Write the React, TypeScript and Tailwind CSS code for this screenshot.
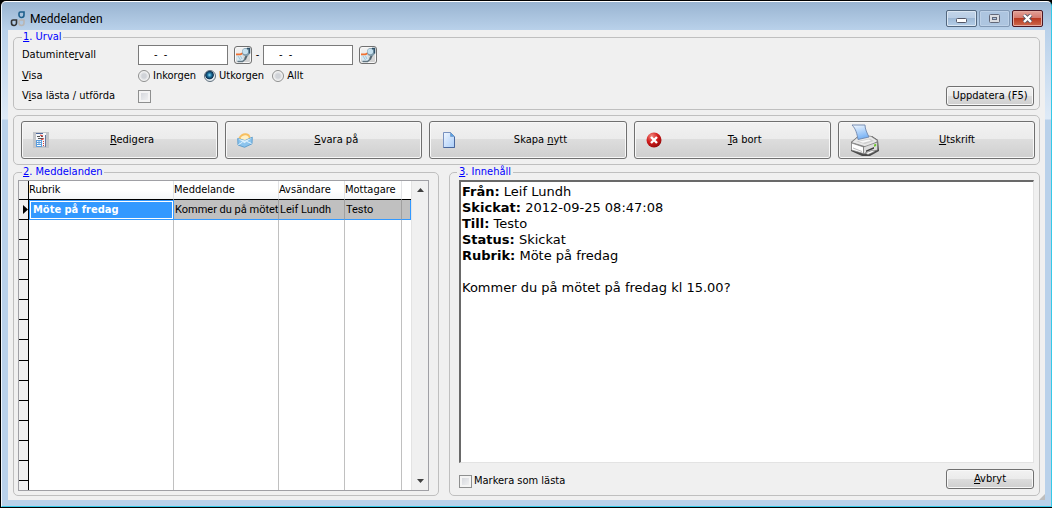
import type { ReactNode } from "react";

type Message = {
	subject: string;
	body: string;
	preview: string;
	sender: string;
	receiver: string;
};

const MESSAGES: Message[] = [
	{
		subject: "Möte på fredag",
		body: "Kommer du på mötet på fredag kl 15.00?",
		preview: "Kommer du på mötet",
		sender: "Leif Lundh",
		receiver: "Testo"
	}
];

const DETAILS = [
	{ label: "Från:", value: "Leif Lundh" },
	{ label: "Skickat:", value: "2012-09-25 08:47:08" },
	{ label: "Till:", value: "Testo" },
	{ label: "Status:", value: "Skickat" },
	{ label: "Rubrik:", value: "Möte på fredag" }
];

const EMPTY_ROWS = 13;

const BUTTON =
	"rounded-[3px] border border-[#707070] bg-[linear-gradient(#f2f2f2,#ebebeb_48%,#dddddd_48%,#cfcfcf)] shadow-[inset_0_0_0_1px_#f8f8f8]";

const CHECKBOX =
	"h-[13px] w-[13px] shrink-0 appearance-none border border-[#8e8f8f] bg-[linear-gradient(135deg,#cfd2d8,#f6f6f6)] shadow-[inset_0_0_0_2px_#f4f4f4]";

function AppLogo() {
	return (
		<svg className="h-4 w-4" viewBox="0 0 16 16" fill="none" strokeWidth="1.600">
			<path d="M10.500 1H14v3a2.500 2.500 0 0 1-2.500 2.500A2.500 2.500 0 0 1 9 4V2.500A1.500 1.500 0 0 1 10.500 1z" stroke="#1d5f8c" />
			<path d="M3 9h3.500v3A2.500 2.500 0 0 1 4 14.500 2.500 2.500 0 0 1 1.500 12v-1.500A1.500 1.500 0 0 1 3 9z" stroke="#333" />
			<path d="M10.500 9H14v3a2.500 2.500 0 0 1-2.500 2.500A2.500 2.500 0 0 1 9 12v-1.500A1.500 1.500 0 0 1 10.500 9z" stroke="#b9b6b4" />
		</svg>
	);
}

function PickerIcon() {
	return (
		<svg className="h-4 w-4" viewBox="0 0 16 16">
			<path d="M1 8.500l6-.8 2 5.300-1.500 2L2 14.500z" fill="#d8e9f2" />
			<path d="M2.500 14.500h5l3.500-3" fill="none" stroke="#5f7480" strokeWidth="1.500" />
			<path d="M3 9l2.500 4M5.500 9l1.500 3" stroke="#a0c4d8" />
			<path d="M1 7.300h4.500l3-1.500" fill="none" stroke="#f07030" strokeWidth="1.700" />
			<path d="M12 8l-2 4" stroke="#536570" strokeWidth="2" />
			<circle cx="11" cy="5" r="4" fill="#7f9bab" />
			<circle cx="10.300" cy="4.500" r="2.800" fill="#c5e0ef" />
			<path d="M12 1.500h2.500v5" fill="none" stroke="#2e5068" strokeWidth="1.500" />
		</svg>
	);
}

function EditIcon() {
	return (
		<svg className="h-4 w-4" viewBox="0 0 16 16">
			<path d="M0 0h16v16H0z" fill="#c3c5c9" />
			<path d="M3 1h10v13H3z" fill="#f5f7fb" />
			<path d="M3 1.500h7" stroke="#506a9c" />
			<path d="M12.500 3v12" stroke="#6678a0" />
			<path d="M4 4.500h3M8 4.500h2M5 6.500h5" stroke="#555" />
			<path d="M7 3l3 1M8 8l3-1.500" stroke="#d8403a" strokeWidth="1.200" />
			<path d="M3 8h6v7H3z" fill="#5b9ddd" />
			<path d="M4 9.500h1.500M6.500 9.500H8M4 11.500h1.500M6.500 11.500H8M4 13.500h4" stroke="#fff" />
			<path d="M10.500 9v5" stroke="#d8403a" strokeDasharray="1 1" />
		</svg>
	);
}

function ReplyIcon() {
	return (
		<svg className="h-4 w-4" viewBox="0 0 16 16">
			<path d="M1.500 6C3 2.500 6 .8 9 1.200s4.500 2 4.500 5.300l-6 3z" fill="#f7bf5f" />
			<path d="M3.500 6C5 3.700 7 3 9 3.300s3 1.700 3 4l-5 2z" fill="#fff0c6" />
			<path d="M.7 6.500L8 8.500l7.300-3.300-.3 6.600-7.500 3.500L1 13z" fill="#8cc4ed" stroke="#4b93c9" strokeWidth=".8" />
			<path d="M1 6.800l6.500 4.400L15 5.700l-7 2.800z" fill="#d9effd" />
			<path d="M1.300 12.700l4.200-2.600M14.500 11.500l-4.500-2" fill="none" stroke="#e2f4ff" />
		</svg>
	);
}

function PageIcon() {
	return (
		<svg className="h-4 w-4" viewBox="0 0 16 16">
			<defs>
				<linearGradient id="page" x2="1" y2="1">
					<stop stopColor="#f1f7ff" />
					<stop offset="1" stopColor="#a8ccf8" />
				</linearGradient>
			</defs>
			<path d="M2.500.500h7l4 4v11h-11z" fill="url(#page)" stroke="#7891bf" />
			<path d="M13.500 5v10.500h-11" fill="none" stroke="#49679d" />
			<path d="M9.500.500v4h4z" fill="#58a3e4" stroke="#6c8dbd" strokeWidth=".6" />
		</svg>
	);
}

function DeleteIcon() {
	return (
		<svg className="h-4 w-4" viewBox="0 0 16 16">
			<defs>
				<radialGradient id="red" cx=".35" cy=".25" r=".8">
					<stop stopColor="#f28a80" />
					<stop offset=".5" stopColor="#d31e1e" />
					<stop offset="1" stopColor="#940909" />
				</radialGradient>
			</defs>
			<circle cx="8" cy="8" r="7.500" fill="url(#red)" />
			<path d="M5 5l6 6M11 5l-6 6" stroke="#fff" strokeWidth="2.400" />
		</svg>
	);
}

function PrinterIcon() {
	return (
		<svg className="h-8 w-[30px]" viewBox="0 0 30 32">
			<defs>
				<linearGradient id="sheet" x2=".3" y2="1">
					<stop stopColor="#f4f9ff" />
					<stop offset="1" stopColor="#79b3f5" />
				</linearGradient>
			</defs>
			<path d="M1 18l6-5 15-1 6 4 1 11-9 5h-8L1 27z" fill="#4b4b4b" />
			<path d="M1.500 18.500L7 13.500l12-1.500 2 .3 7 4.700-10 6.500z" fill="#e8e8e8" stroke="#8a8a8a" strokeWidth=".7" />
			<path d="M2 1h13c0 4 2 8 4 12L8 15.500C7 10 6 5 2 1z" fill="url(#sheet)" stroke="#6e86ad" strokeWidth=".9" />
			<path d="M6 17.500l14-3 4 2.500-9 3z" fill="#cfcfcf" />
			<path d="M9 17.500l10-2 2 1.300-8 2z" fill="#f9f9f9" />
			<path d="M1.500 19l12 4v6.500L1.500 26z" fill="#fff" stroke="#8b8b8b" strokeWidth=".7" />
			<path d="M3 24l9 3.500" stroke="#aaa" strokeWidth=".8" />
			<path d="M13.500 23L27.500 18v8l-14 4z" fill="#dcdcdc" stroke="#777" strokeWidth=".7" />
			<path d="M16 26.500l8-3.500v1.700l-8 3.300z" fill="#3e3e3e" />
			<path d="M15 29l7-2.500 3 1-7 3z" fill="#fff" stroke="#777" strokeWidth=".7" />
			<path d="M24 20.500l2.200-.8v2.300l-2.200.8z" fill="#6fc82f" />
		</svg>
	);
}

const TOOLS: { id: string; icon: ReactNode; label: ReactNode; iconBox: string }[] = [
	{ id: "edit", icon: <EditIcon />, label: <><u>R</u>edigera</>, iconBox: "w-9" },
	{ id: "reply", icon: <ReplyIcon />, label: <><u>S</u>vara på</>, iconBox: "w-9" },
	{ id: "new", icon: <PageIcon />, label: <>Skapa <u>n</u>ytt</>, iconBox: "w-9" },
	{ id: "delete", icon: <DeleteIcon />, label: <><u>T</u>a bort</>, iconBox: "w-9" },
	{ id: "print", icon: <PrinterIcon />, label: <><u>U</u>tskrift</>, iconBox: "w-13" }
];

function TitleBar() {
	return (
		<header className="flex h-7 items-center pt-[5px] pr-[2px] pl-[2px]">
			<AppLogo />
			<h1 className="flex-1 pl-1 font-[Roboto,sans-serif] text-[12px] leading-4">Meddelanden</h1>
			<div className="flex gap-[2px]">
				<button
					type="button"
					aria-label="Minimera"
					className="flex h-[17px] w-[31px] items-center justify-center rounded-[2px] border border-[#52677f] bg-[linear-gradient(#c3d5e9,#b8cde5_48%,#9db8d5_48%,#b5cee8)] shadow-[inset_0_0_0_1px_#dbe7f3]"
				>
					<svg className="mt-1 h-[5px] w-[11px]" viewBox="0 0 11 5">
						<rect x=".5" y=".5" width="10" height="4" rx="1" fill="#fff" stroke="#535666" />
					</svg>
				</button>
				<button
					type="button"
					aria-label="Maximera"
					disabled
					className="flex h-[17px] w-[31px] items-center justify-center rounded-[2px] border border-[#8299b5] bg-[#adc5e0] shadow-[inset_0_0_0_1px_#bdd1e8]"
				>
					<svg className="h-[9px] w-[11px]" viewBox="0 0 11 9">
						<rect x=".5" y=".5" width="10" height="8" rx="1" fill="#dbdde2" stroke="#626879" />
						<rect x="3.500" y="3.500" width="4" height="2" fill="#adc5e0" stroke="#626879" />
					</svg>
				</button>
				<button
					type="button"
					aria-label="Stäng"
					className="flex h-[17px] w-[31px] items-center justify-center rounded-[2px] border border-[#4c1622] bg-[linear-gradient(#e2a198,#d4776b_48%,#b8371f_48%,#cd6a4d)] shadow-[inset_0_0_0_1px_#e5aaa0]"
				>
					<svg className="h-[9px] w-[11px]" viewBox="0 0 11 9">
						<path d="M2 1l7 7M9 1L2 8" stroke="#535666" strokeWidth="4" />
						<path d="M2 1l7 7M9 1L2 8" stroke="#fff" strokeWidth="2.400" />
					</svg>
				</button>
			</div>
		</header>
	);
}

function DateField({ label, id }: { label: string; id: string }) {
	return (
		<>
			<input
				id={id}
				aria-label={label}
				defaultValue="-  -"
				className="h-5 w-[90px] border border-[#7a7a7a] bg-white pl-[15px] whitespace-pre"
			/>
			<button
				type="button"
				aria-label={`Välj ${label.toLowerCase()}`}
				className={`ml-[6px] flex h-[18px] w-[18px] items-center justify-center ${BUTTON}`}
			>
				<PickerIcon />
			</button>
		</>
	);
}

function Radio({ label, checked }: { label: string; checked?: boolean }) {
	return (
		<label className="flex items-center gap-[3px]">
			<input
				type="radio"
				name="folder"
				defaultChecked={checked}
				className="h-3 w-3 appearance-none rounded-full border border-[#8e8f8f] bg-[radial-gradient(circle,#d0d3d8_30%,#f4f4f4_65%)] checked:border-[#5f6f7d] checked:bg-[radial-gradient(circle_at_45%_40%,#8fe0f8_0%,#1c6f9c_25%,#0b2f4f_48%,#e8eef2_58%)]"
			/>
			{label}
		</label>
	);
}

function Filters() {
	return (
		<fieldset className="flex min-w-0 items-end justify-between rounded-[5px] border border-[#bfbfbf] pt-[2px] pr-[5px] pb-[3px] pl-2">
			<legend className="px-px leading-3 text-[#0000ff]">
				<u>1</u>. Urval
			</legend>
			<div className="grid grid-cols-[116px_auto] leading-5">
				<label htmlFor="from">
					Datuminte<u>r</u>vall
				</label>
				<div className="flex items-center">
					<DateField id="from" label="Från datum" />
					<span className="w-[11px] text-center">-</span>
					<DateField id="to" label="Till datum" />
				</div>
				<span className="pt-px">
					<u>V</u>isa
				</span>
				<div className="flex items-center gap-2 pt-px">
					<Radio label="Inkorgen" />
					<Radio label="Utkorgen" checked />
					<Radio label="Allt" />
				</div>
				<label htmlFor="read">
					V<u>i</u>sa lästa / utförda
				</label>
				<div className="flex items-center">
					<input id="read" type="checkbox" className={CHECKBOX} />
				</div>
			</div>
			<button type="button" className={`h-5 w-[88px] ${BUTTON}`}>
				Uppdatera (F5)
			</button>
		</fieldset>
	);
}

function Toolbar() {
	return (
		<div className="mt-[5px] grid grid-cols-5 gap-[7px] rounded-[5px] border border-[#bfbfbf] py-[5px] pr-1 pl-[7px]">
			{TOOLS.map((tool) => (
				<button key={tool.id} type="button" className={`flex h-[38px] items-center pr-1 pl-[11px] ${BUTTON}`}>
					<span className={`shrink-0 ${tool.iconBox}`}>{tool.icon}</span>
					<span className="flex-1 pr-[18px] text-center">{tool.label}</span>
				</button>
			))}
		</div>
	);
}

function MessageList() {
	return (
		<fieldset className="flex w-[426px] shrink-0 rounded-[5px] border border-[#bfbfbf] px-1 pb-1">
			<legend className="ml-1 px-px leading-3 text-[#0000ff]">
				<u>2</u>. Meddelanden
			</legend>
			<div className="mt-[2px] flex w-[411px] border border-[#a0a0a5] bg-white">
				<table className="w-[392px] table-fixed border-separate border-spacing-0 text-left">
					<colgroup>
						<col className="w-[10px]" />
						<col className="w-[145px]" />
						<col className="w-[105px]" />
						<col className="w-[66px]" />
						<col className="w-[57px]" />
						<col className="w-[9px]" />
					</colgroup>
					<thead>
						<tr className="h-[19px] bg-[linear-gradient(#ffffff_50%,#f3f5f7)] *:border-b *:border-b-black *:p-0 *:font-normal">
							<th className="border-r border-r-black bg-[#f0f0f0]" />
							<th className="border-r border-r-[#e2e3e5]">Rubrik</th>
							<th className="border-r border-r-[#e2e3e5]">Meddelande</th>
							<th className="border-r border-r-[#e2e3e5]">Avsändare</th>
							<th className="border-r border-r-[#e2e3e5]">Mottagare</th>
							<th className="bg-white" />
						</tr>
					</thead>
					<tbody>
						{MESSAGES.map((message) => (
							<tr
								key={message.subject}
								className="h-5 bg-[#c0c0c0] *:border-b *:border-b-[#3399ff] *:py-0 *:whitespace-nowrap"
							>
								<td className="border-r border-r-black !border-b-black bg-[#f0f0f0] px-0">
									<svg className="ml-1 h-[9px] w-[5px]" viewBox="0 0 5 9">
										<path d="M0 0l5 4.500L0 9z" />
									</svg>
								</td>
								<td className="border-t border-r border-l border-[#3399ff] bg-white px-0">
									<div className="m-px bg-[#3399ff] pl-[2px] font-bold text-white leading-4">{message.subject}</div>
								</td>
								<td
									className="border-r border-r-[#a0a0a0] pr-0 pl-px font-[Roboto,sans-serif]"
									title={message.body}
								>
									{message.preview}
								</td>
								<td className="border-r border-r-[#a0a0a0] pr-0 pl-px font-[Roboto,sans-serif]">
									{message.sender}
								</td>
								<td className="border-r border-r-[#a0a0a0] pr-0 pl-px font-[Roboto,sans-serif]">
									{message.receiver}
								</td>
								<td className="border-r border-r-[#3399ff] px-0" />
							</tr>
						))}
						{Array.from({ length: EMPTY_ROWS }, (_, i) => (
							<tr key={i} className="h-5 *:border-r *:border-r-[#c0c0c0] *:p-0">
								<td className="border-b border-b-black !border-r-black bg-[#f0f0f0]" />
								<td />
								<td />
								<td />
								<td />
								<td className="!border-r-0" />
							</tr>
						))}
						<tr className="*:border-r *:border-r-[#c0c0c0] *:p-0">
							<td className="h-[9px] !border-r-black bg-[#f0f0f0]" />
							<td />
							<td />
							<td />
							<td />
							<td className="!border-r-0" />
						</tr>
					</tbody>
				</table>
				<div className="flex flex-1 flex-col items-center justify-between border-l border-[#e3e3e3] bg-[#f0f0f0] py-[7px]">
					<svg className="h-1 w-[7px]" viewBox="0 0 7 4">
						<path d="M3.500 0L7 4H0z" fill="#404040" />
					</svg>
					<svg className="h-1 w-[7px]" viewBox="0 0 7 4">
						<path d="M0 0h7L3.500 4z" fill="#404040" />
					</svg>
				</div>
			</div>
		</fieldset>
	);
}

function MessageContent() {
	return (
		<fieldset className="flex min-w-0 flex-1 flex-col rounded-[5px] border border-[#bfbfbf] pr-[5px] pb-[6px] pl-[9px]">
			<legend className="-ml-[2px] px-[2px] leading-3 text-[#0000ff]">
				<u>3</u>. Innehåll
			</legend>
			<article className="mt-[2px] flex-1 border-t-2 border-r border-b border-l-2 border-t-[#696969] border-r-[#e3e3e3] border-b-[#e3e3e3] border-l-[#696969] bg-white pt-[2px] pl-px font-['DejaVu_Sans',sans-serif] text-[13px] leading-4">
				{DETAILS.map((detail) => (
					<p key={detail.label}>
						<b>{detail.label}</b> {detail.value}
					</p>
				))}
				<p className="mt-4">{MESSAGES[0].body}</p>
			</article>
			<div className="mt-[6px] flex items-center justify-between">
				<label className="flex items-center gap-[2px] pt-1">
					<input type="checkbox" className={CHECKBOX} />
					Markera som lästa
				</label>
				<button type="button" className={`h-5 w-[88px] ${BUTTON}`}>
					<u>A</u>vbryt
				</button>
			</div>
		</fieldset>
	);
}

export default function App() {
	return (
		<div className="min-h-screen bg-black pt-px pb-px pl-px">
			<div className="flex min-h-[calc(100vh-2px)] flex-col rounded-t-[5px] border-t border-r border-b border-l border-t-white border-r-[#35c9e8] border-b-[#35c9e8] border-l-[#f0f6fc] bg-[linear-gradient(#99b4d1,#b9d1ea_28px,#deeaf7_117px,#b9d1ea_118px)] px-[6px] pb-[6px] font-['DejaVu_Sans_Condensed','DejaVu_Sans',sans-serif] text-[11px] text-black leading-[14px]">
				<TitleBar />
				<main className="relative flex flex-1 flex-col bg-[#f0f0f0] px-[5px] pt-px pb-1">
					<Filters />
					<Toolbar />
					<div className="mt-px flex flex-1 gap-[10px]">
						<MessageList />
						<MessageContent />
					</div>
					<svg className="absolute right-0 bottom-0 h-[6px] w-[6px]" viewBox="0 0 6 6">
						<path d="M6 0v6H0z" fill="#bdbdbd" />
					</svg>
				</main>
			</div>
		</div>
	);
}
